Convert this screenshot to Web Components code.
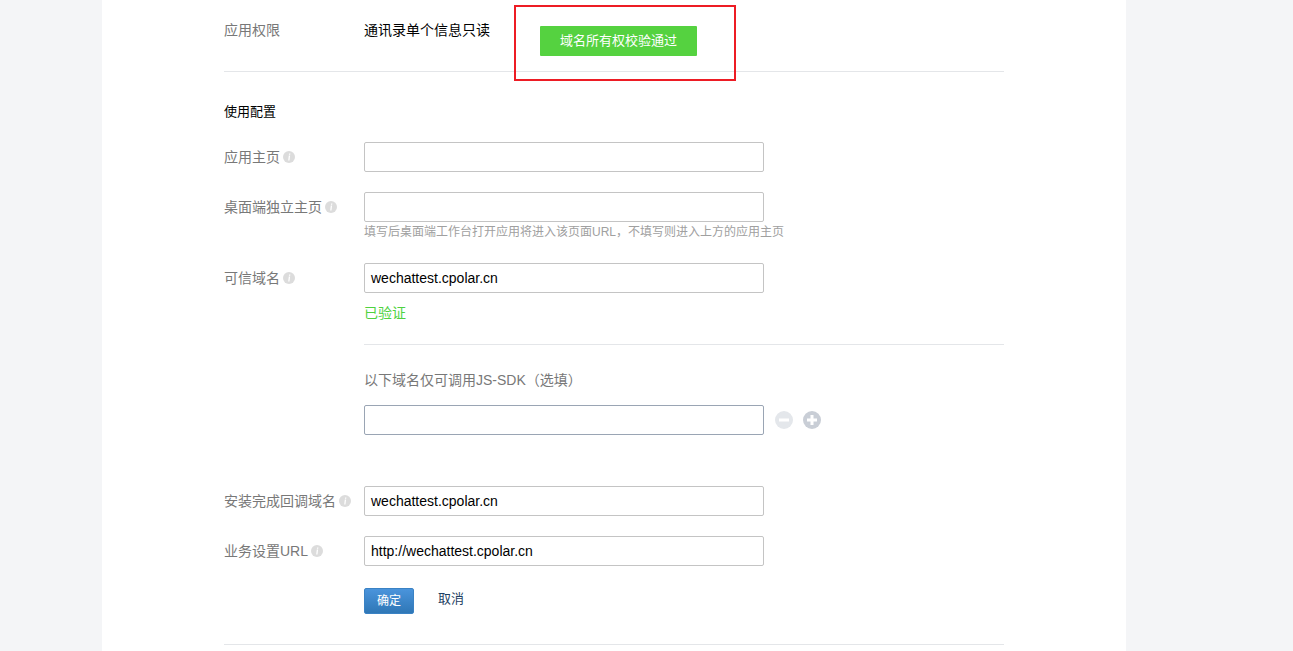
<!DOCTYPE html>
<html lang="zh-CN">
<head>
<meta charset="utf-8">
<title>应用配置</title>
<style>
    html, body { margin: 0; height: 651px; overflow: hidden; background: #f4f5f7; }
    body { font-family: "Liberation Sans", "Noto Sans CJK SC", sans-serif; font-size: 14px; color: #000; }
</style>
</head>
<body>
<app-card>
    <form-row label="应用权限" plain>
        <span>通讯录单个信息只读</span>
        <check-note></check-note>
    </form-row>
    <hr-line></hr-line>
    <section-title>使用配置</section-title>

    <form-row label="应用主页" info style="margin-top:20px"><text-field></text-field></form-row>
    <form-row label="桌面端独立主页" info style="margin-top:20px">
        <text-field></text-field>
        <field-hint>填写后桌面端工作台打开应用将进入该页面URL，不填写则进入上方的应用主页</field-hint>
    </form-row>
    <form-row label="可信域名" info style="margin-top:20px">
        <text-field>wechattest.cpolar.cn</text-field>
        <verified-tag>已验证</verified-tag>
        <hr-line style="margin-top:21px"></hr-line>
        <sub-title>以下域名仅可调用JS-SDK（选填）</sub-title>
        <domain-adder></domain-adder>
    </form-row>
    <form-row label="安装完成回调域名" info style="margin-top:51px"><text-field>wechattest.cpolar.cn</text-field></form-row>
    <form-row label="业务设置URL" info style="margin-top:20px"><text-field>http://wechattest.cpolar.cn</text-field></form-row>
    <form-row style="margin-top:22px"><form-actions></form-actions></form-row>
    <hr-line style="margin-top:30px"></hr-line>
</app-card>

<script>
class AppCard extends HTMLElement {
    constructor() {
        super();
        this.attachShadow({ mode: 'open' });
        this.shadowRoot.innerHTML = `
            <style>
                :host {
                    display: block;
                    box-sizing: border-box;
                    width: 1024px;
                    height: 651px;
                    margin-left: 102px;
                    padding: 20px 122px 0;
                    background: #fff;
                }
            </style>
            <slot></slot>
        `;
    }
}

class FormRow extends HTMLElement {
    constructor() {
        super();
        this.attachShadow({ mode: 'open' });
        const label = this.getAttribute('label') || '';
        const icon = this.hasAttribute('info') ? '<info-icon></info-icon>' : '';
        this.shadowRoot.innerHTML = `
            <style>
                :host { display: flex; line-height: 30px; }
                :host([plain]) { line-height: 20px; padding-bottom: 31px; }
                .label {
                    flex: none;
                    display: flex;
                    align-items: center;
                    align-self: flex-start;
                    gap: 3px;
                    width: 140px;
                    color: #787878;
                    white-space: nowrap;
                }
                .body { flex: 1; min-width: 0; position: relative; }
            </style>
            <div class="label"><span>${label}</span>${icon}</div>
            <div class="body"><slot></slot></div>
        `;
    }
}

class InfoIcon extends HTMLElement {
    constructor() {
        super();
        this.attachShadow({ mode: 'open' });
        this.shadowRoot.innerHTML = `
            <style>
                :host { display: inline-flex; width: 12px; height: 12px; }
            </style>
            <svg width="12" height="12" viewBox="0 0 12 12">
                <circle cx="6" cy="6" r="6" fill="#dcdcdc"/>
                <path d="M6.1 2.4h1.3l-.2 1.3H5.9zM5.8 4.6h1.3L6.5 9.4H5.2z" fill="#fff"/>
            </svg>
        `;
    }
}

class TextField extends HTMLElement {
    constructor() {
        super();
        this.attachShadow({ mode: 'open' });
        this.shadowRoot.innerHTML = `
            <style>
                :host {
                    display: block;
                    box-sizing: border-box;
                    width: 400px;
                    height: 30px;
                    padding: 0 6px;
                    border: 1px solid #c4c4c4;
                    border-radius: 2px;
                    background: #fff;
                    color: #000;
                    font-size: 14px;
                    line-height: 28px;
                    white-space: nowrap;
                }
                :host([active]) { border-color: #9aa5b4; }
            </style>
            <slot></slot>
        `;
    }
}

class FieldHint extends HTMLElement {
    constructor() {
        super();
        this.attachShadow({ mode: 'open' });
        this.shadowRoot.innerHTML = `
            <style>
                :host { display: block; color: #a0a0a0; font-size: 12px; line-height: 21px; white-space: nowrap; }
            </style>
            <slot></slot>
        `;
    }
}

class VerifiedTag extends HTMLElement {
    constructor() {
        super();
        this.attachShadow({ mode: 'open' });
        this.shadowRoot.innerHTML = `
            <style>
                :host { display: block; margin-top: 10px; color: #4fd23f; line-height: 20px; }
            </style>
            <slot></slot>
        `;
    }
}

class SubTitle extends HTMLElement {
    constructor() {
        super();
        this.attachShadow({ mode: 'open' });
        this.shadowRoot.innerHTML = `
            <style>
                :host { display: block; margin-top: 25px; color: #787878; line-height: 20px; }
            </style>
            <slot></slot>
        `;
    }
}

class SectionTitle extends HTMLElement {
    constructor() {
        super();
        this.attachShadow({ mode: 'open' });
        this.shadowRoot.innerHTML = `
            <style>
                :host { display: block; margin-top: 30px; font-size: 13px; line-height: 20px; color: #000; }
            </style>
            <slot></slot>
        `;
    }
}

class HrLine extends HTMLElement {
    constructor() {
        super();
        this.attachShadow({ mode: 'open' });
        this.shadowRoot.innerHTML = `
            <style>
                :host { display: block; height: 1px; background: #e4e6e9; }
            </style>
        `;
    }
}

// the red annotation box drawn over the page, with the green result inside
class CheckNote extends HTMLElement {
    constructor() {
        super();
        this.attachShadow({ mode: 'open' });
        this.shadowRoot.innerHTML = `
            <style>
                :host {
                    position: absolute;
                    left: 150px;
                    top: -15px;
                    box-sizing: border-box;
                    width: 222px;
                    height: 76px;
                    padding: 19px 0 0 24px;
                    border: 2px solid #ed1c24;
                }
                .ok {
                    width: 157px;
                    height: 30px;
                    background: #55d240;
                    color: #fff;
                    font-size: 13px;
                    line-height: 30px;
                    text-align: center;
                    border-radius: 1px;
                }
            </style>
            <div class="ok">域名所有权校验通过</div>
        `;
    }
}

class DomainAdder extends HTMLElement {
    constructor() {
        super();
        this.attachShadow({ mode: 'open' });
        this.shadowRoot.innerHTML = `
            <style>
                :host { display: flex; align-items: center; margin-top: 15px; }
                svg { flex: none; }
                .minus { margin-left: 11px; }
                .plus { margin-left: 10px; }
            </style>
            <text-field active></text-field>
            <svg class="minus" width="18" height="18" viewBox="0 0 18 18">
                <circle cx="9" cy="9" r="9" fill="#e4e7eb"/>
                <rect x="4" y="7.5" width="10" height="3" fill="#fff"/>
            </svg>
            <svg class="plus" width="18" height="18" viewBox="0 0 18 18">
                <circle cx="9" cy="9" r="9" fill="#c9ced6"/>
                <path d="M7.5 4h3v3.5H14v3h-3.5V14h-3v-3.5H4v-3h3.5z" fill="#fff"/>
            </svg>
        `;
    }
}

class FormActions extends HTMLElement {
    constructor() {
        super();
        this.attachShadow({ mode: 'open' });
        this.shadowRoot.innerHTML = `
            <style>
                :host { display: flex; align-items: center; font-size: 13px; }
                .ok {
                    box-sizing: border-box;
                    width: 50px;
                    height: 26px;
                    border: 1px solid #3a82c4;
                    border-radius: 2px;
                    background: linear-gradient(#4a94dc, #2f77b6);
                    color: #fff;
                    font-size: 12px;
                    line-height: 24px;
                    text-align: center;
                }
                .cancel { margin: -4px 0 0 24px; color: #1f3f63; line-height: 26px; }
            </style>
            <div class="ok">确定</div>
            <div class="cancel">取消</div>
        `;
    }
}

customElements.define('app-card', AppCard);
customElements.define('form-row', FormRow);
customElements.define('info-icon', InfoIcon);
customElements.define('text-field', TextField);
customElements.define('field-hint', FieldHint);
customElements.define('verified-tag', VerifiedTag);
customElements.define('sub-title', SubTitle);
customElements.define('section-title', SectionTitle);
customElements.define('hr-line', HrLine);
customElements.define('check-note', CheckNote);
customElements.define('domain-adder', DomainAdder);
customElements.define('form-actions', FormActions);
</script>
</body>
</html>
